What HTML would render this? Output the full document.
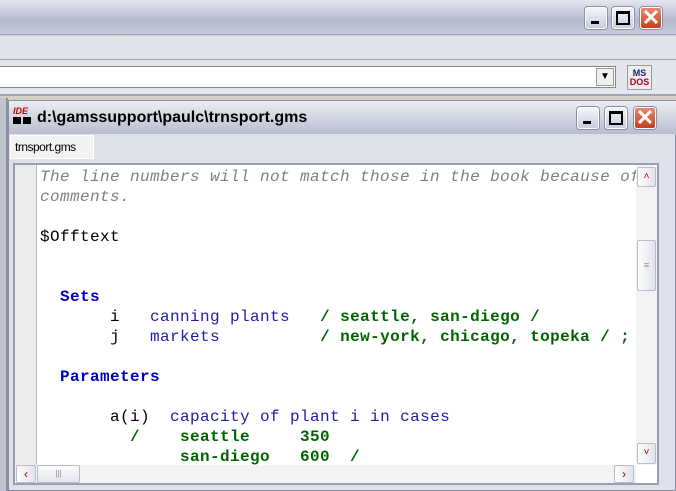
<!DOCTYPE html>
<html><head><style>
*{margin:0;padding:0;box-sizing:border-box}
body{width:676px;height:491px;overflow:hidden;background:#d4d0c8;position:relative;font-family:"Liberation Sans",sans-serif}
.a{position:absolute}
.btn{position:absolute;width:22px;height:22px;border:1px solid #fff;border-radius:3px;background:linear-gradient(#f4f6fb,#c8cde0);box-shadow:0 0 0 1px #8a90a8}
.cls{background:linear-gradient(#e88a70,#c4401c)}
.code{position:absolute;left:40px;top:167px;font-family:"Liberation Mono",monospace;font-size:16px;letter-spacing:0.4px;line-height:20px;white-space:pre;color:#000}
.c{color:#808080;font-style:italic}
.k{color:#0000c0;font-weight:bold}
.b{color:#2020a0}
.g{color:#006400;font-weight:bold}
.sb{position:absolute;background:linear-gradient(90deg,#fdfdfd,#e2e4ec);border:1px solid #b8bccc;border-radius:2px}
</style></head><body>
<div class="a" style="left:0;top:0;width:676px;height:35px;background:linear-gradient(#e4e6ef,#b4b9cc 60%,#c8ccdb);border-bottom:1px solid #9ea3b8"></div>
<div class="btn" style="left:585px;top:7px"><div class="a" style="left:5px;top:13px;width:8px;height:3px;background:#000"></div></div>
<div class="btn" style="left:612px;top:7px"><div class="a" style="left:3px;top:3px;width:14px;height:14px;border:2px solid #000;border-top-width:3px"></div></div>
<div class="btn cls" style="left:640px;top:7px;color:#fff;font-size:22px;font-weight:bold;line-height:20px;text-align:center">✕</div>
<div class="a" style="left:0;top:36px;width:676px;height:24px;background:#e1e3ec;border-bottom:1px solid #a0a4b4"></div>
<div class="a" style="left:0;top:60px;width:676px;height:36px;background:#e4e6ee;border-bottom:2px solid #a0a4b4"></div>
<div class="a" style="left:0;top:66px;width:616px;height:22px;background:#fff;border:1px solid #888;border-left:none"></div>
<div class="a" style="left:596px;top:68px;width:18px;height:18px;background:#f0f0f0;border:1px solid #999;font-size:10px;text-align:center;line-height:16px">▼</div>
<div class="a" style="left:627px;top:65px;width:25px;height:25px;background:#eee;border:1px solid #999;font-size:9px;font-weight:bold;line-height:9px;text-align:center;padding-top:3px;color:#226">MS<br><span style="color:#a02">DOS</span></div>
<div class="a" style="left:0;top:98px;width:8px;height:393px;background:#c0c4d0;border-right:2px solid #8a8ea0"></div>
<div class="a" style="left:8px;top:100px;width:668px;height:391px;background:#dfe1ea;border:1px solid #8a8ea0"></div>
<div class="a" style="left:9px;top:101px;width:667px;height:33px;background:linear-gradient(#eceef4,#b8bdd0)"></div>
<div class="a" style="left:13px;top:106px;font-size:9px;font-style:italic;font-weight:bold;color:#c00">IDE</div>
<div class="a" style="left:13px;top:117px;width:8px;height:7px;background:#000"></div>
<div class="a" style="left:23px;top:117px;width:8px;height:7px;background:#000"></div>
<div class="a" style="left:37px;top:109px;font-size:16px;font-weight:bold;color:#000">d:\gamssupport\paulc\trnsport.gms</div>
<div class="btn" style="left:577px;top:107px"><div class="a" style="left:5px;top:13px;width:8px;height:3px;background:#000"></div></div>
<div class="btn" style="left:605px;top:107px"><div class="a" style="left:3px;top:3px;width:14px;height:14px;border:2px solid #000;border-top-width:3px"></div></div>
<div class="btn cls" style="left:634px;top:107px;color:#fff;font-size:22px;font-weight:bold;line-height:20px;text-align:center">✕</div>
<div class="a" style="left:10px;top:135px;width:84px;height:24px;background:#f2f2f2;border:1px solid #fff;font-size:12px;letter-spacing:-0.5px;padding:4px 0 0 4px">trnsport.gms</div>
<div class="a" style="left:13px;top:163px;width:646px;height:322px;background:#fff;border:2px solid #9a9eb0"></div>
<div class="a" style="left:15px;top:165px;width:22px;height:300px;background:#ececec;border-right:1px solid #bbb"></div>
<div class="code"><span class="c">The line numbers will not match those in the book because of
comments.</span>

$Offtext


  <span class="k">Sets</span>
       i   <span class="b">canning plants</span>   <span class="g">/ seattle, san-diego /</span>
       j   <span class="b">markets</span>          <span class="g">/ new-york, chicago, topeka / ;</span>

  <span class="k">Parameters</span>

       a(i)  <span class="b">capacity of plant i in cases</span>
         <span class="g">/    seattle     350</span>
              <span class="g">san-diego   600  /</span></div>
<div class="a" style="left:636px;top:165px;width:21px;height:300px;background:#f3f3f6"></div>
<div class="sb" style="left:637px;top:167px;width:19px;height:20px;color:#a00;font-size:10px;text-align:center;line-height:18px">˄</div>
<div class="sb" style="left:637px;top:240px;width:19px;height:51px;font-size:9px;color:#888;text-align:center;line-height:49px">≡</div>
<div class="sb" style="left:637px;top:443px;width:19px;height:21px;color:#a00;font-size:10px;text-align:center;line-height:18px">˅</div>
<div class="a" style="left:15px;top:465px;width:621px;height:18px;background:#f3f3f6"></div>
<div class="sb" style="left:16px;top:465px;width:20px;height:18px;color:#a00;font-size:12px;text-align:center;line-height:16px">‹</div>
<div class="sb" style="left:37px;top:465px;width:43px;height:18px;background:linear-gradient(#fdfdfd,#e2e4ec);font-size:8px;color:#888;text-align:center;line-height:16px">|||</div>
<div class="sb" style="left:614px;top:465px;width:20px;height:18px;color:#a00;font-size:12px;text-align:center;line-height:16px">›</div>
</body></html>
